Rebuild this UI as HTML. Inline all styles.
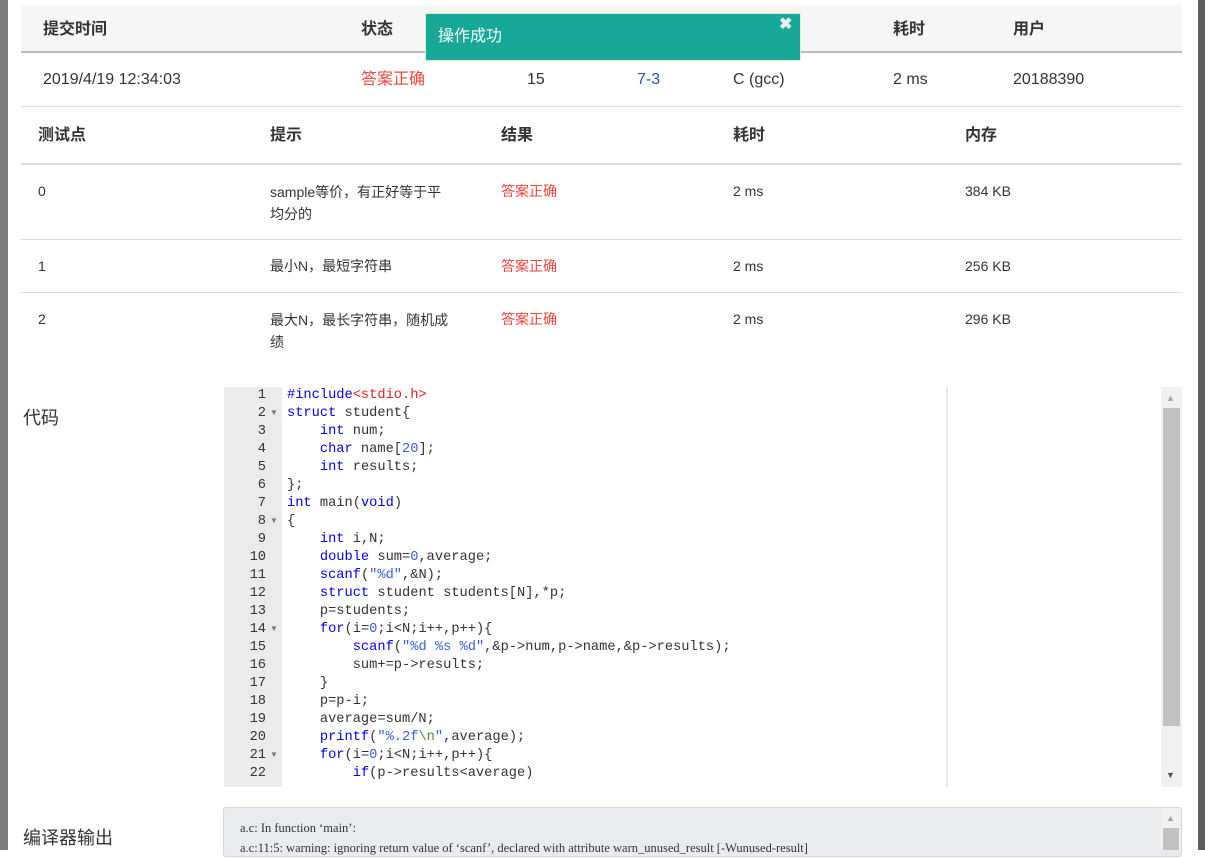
<!DOCTYPE html>
<html><head><meta charset="utf-8"><style>
*{margin:0;padding:0;box-sizing:border-box}
body{width:1205px;height:850px;overflow:hidden;background:#fff;position:relative;font-family:"Liberation Sans","Noto Sans CJK SC",sans-serif;color:#333}
.a{position:absolute;white-space:nowrap;line-height:20px}
.h{font-weight:bold;font-size:16px;color:#333}
.r{color:#f0443c}
.code{position:absolute;left:287px;top:387px;font-family:"Liberation Mono",monospace;font-size:13.7px;line-height:18px;color:#333;white-space:pre}
.gut{position:absolute;left:224px;top:387px;width:58px;height:400px;background:#ebebeb;font-family:"Liberation Mono",monospace;font-size:13.7px;line-height:18px;color:#333;text-align:right;padding-right:16px;white-space:pre}
.k{color:#0000ee}.s{color:#3a5fd6}.n{color:#3a5fd6}.i{color:#e02020}.g{color:#5a8a2a}
</style></head><body>
<div class="a" style="left:0;top:0;width:8px;height:850px;background:#7d7d7d"></div>
<div class="a" style="left:1198px;top:0;width:7px;height:850px;background:#5e5e5e"></div>
<div class="a" style="left:21px;top:5px;width:1161px;height:48px;background:#f6f6f6;border-bottom:2px solid #bbb"></div>
<div class="a h" style="left:43px;top:20px">提交时间</div>
<div class="a h" style="left:361px;top:20px">状态</div>
<div class="a h" style="left:893px;top:20px">耗时</div>
<div class="a h" style="left:1013px;top:20px">用户</div>
<div class="a" style="left:43px;top:70px;font-size:16px">2019/4/19 12:34:03</div>
<div class="a r" style="left:361px;top:70px;font-size:16px">答案正确</div>
<div class="a" style="left:527px;top:70px;font-size:16px">15</div>
<div class="a" style="left:637px;top:70px;font-size:16px;color:#2a5a9a">7-3</div>
<div class="a" style="left:733px;top:70px;font-size:16px">C (gcc)</div>
<div class="a" style="left:893px;top:70px;font-size:16px">2 ms</div>
<div class="a" style="left:1013px;top:70px;font-size:16px">20188390</div>
<div class="a" style="left:21px;top:106px;width:1161px;height:1px;background:#ddd"></div>
<div class="a" style="left:425px;top:13px;width:376px;height:48px;background:#17a898;border:1px solid #d9edc9;border-radius:2px"></div>
<div class="a" style="left:438px;top:27px;font-size:16px;color:#fff">操作成功</div>
<div class="a" style="left:779px;top:15px;font-size:16px;font-weight:bold;color:#eee">✖</div>

<div class="a h" style="left:38px;top:126px">测试点</div>
<div class="a h" style="left:270px;top:126px">提示</div>
<div class="a h" style="left:501px;top:126px">结果</div>
<div class="a h" style="left:733px;top:126px">耗时</div>
<div class="a h" style="left:965px;top:126px">内存</div>
<div class="a" style="left:21px;top:163px;width:1161px;height:2px;background:#ddd"></div>
<div class="a" style="left:38px;top:181px;font-size:14px">0</div>
<div class="a" style="left:270px;top:181px;font-size:14px;line-height:22px">sample等价，有正好等于平<br>均分的</div>
<div class="a r" style="left:501px;top:181px;font-size:14px">答案正确</div>
<div class="a" style="left:733px;top:181px;font-size:14px">2 ms</div>
<div class="a" style="left:965px;top:181px;font-size:14px">384 KB</div>
<div class="a" style="left:21px;top:239px;width:1161px;height:1px;background:#ddd"></div>
<div class="a" style="left:38px;top:256px;font-size:14px">1</div>
<div class="a" style="left:270px;top:256px;font-size:14px">最小N，最短字符串</div>
<div class="a r" style="left:501px;top:256px;font-size:14px">答案正确</div>
<div class="a" style="left:733px;top:256px;font-size:14px">2 ms</div>
<div class="a" style="left:965px;top:256px;font-size:14px">256 KB</div>
<div class="a" style="left:21px;top:292px;width:1161px;height:1px;background:#ddd"></div>
<div class="a" style="left:38px;top:309px;font-size:14px">2</div>
<div class="a" style="left:270px;top:309px;font-size:14px;line-height:22px">最大N，最长字符串，随机成<br>绩</div>
<div class="a r" style="left:501px;top:309px;font-size:14px">答案正确</div>
<div class="a" style="left:733px;top:309px;font-size:14px">2 ms</div>
<div class="a" style="left:965px;top:309px;font-size:14px">296 KB</div>

<div class="a" style="left:23px;top:408px;font-size:18px">代码</div>
<div class="gut">1
2
3
4
5
6
7
8
9
10
11
12
13
14
15
16
17
18
19
20
21
22</div>
<div class="a" style="left:270px;top:403px;font-size:8px;color:#777">▼</div>
<div class="a" style="left:270px;top:511px;font-size:8px;color:#777">▼</div>
<div class="a" style="left:270px;top:619px;font-size:8px;color:#777">▼</div>
<div class="a" style="left:270px;top:745px;font-size:8px;color:#777">▼</div>
<div class="code"><span class="k">#include</span><span class="i">&lt;stdio.h&gt;</span>
<span class="k">struct</span> student{
    <span class="k">int</span> num;
    <span class="k">char</span> name[<span class="n">20</span>];
    <span class="k">int</span> results;
};
<span class="k">int</span> main(<span class="k">void</span>)
{
    <span class="k">int</span> i,N;
    <span class="k">double</span> sum=<span class="n">0</span>,average;
    <span class="k">scanf</span>(<span class="s">"%d"</span>,&amp;N);
    <span class="k">struct</span> student students[N],*p;
    p=students;
    <span class="k">for</span>(i=<span class="n">0</span>;i&lt;N;i++,p++){
        <span class="k">scanf</span>(<span class="s">"%d %s %d"</span>,&amp;p-&gt;num,p-&gt;name,&amp;p-&gt;results);
        sum+=p-&gt;results;
    }
    p=p-i;
    average=sum/N;
    <span class="k">printf</span>(<span class="s">"%.2f</span><span class="g">\n</span><span class="s">"</span>,average);
    <span class="k">for</span>(i=<span class="n">0</span>;i&lt;N;i++,p++){
        <span class="k">if</span>(p-&gt;results&lt;average)</div>
<div class="a" style="left:946px;top:387px;width:2px;height:400px;background:#e8e8e8"></div>
<div class="a" style="left:1161px;top:387px;width:21px;height:400px;background:#f1f1f1"></div>
<div class="a" style="left:1163px;top:408px;width:17px;height:318px;background:#c1c1c1"></div>
<div class="a" style="left:1166px;top:388px;font-size:9px;color:#a3a3a3">▲</div>
<div class="a" style="left:1166px;top:765px;font-size:9px;color:#505050">▼</div>

<div class="a" style="left:23px;top:828px;font-size:18px">编译器输出</div>
<div class="a" style="left:223px;top:807px;width:959px;height:50px;background:#e9ecef;border:1px solid #d4d8dc;border-radius:3px"></div>
<div class="a" style="left:240px;top:818px;font-family:'Liberation Serif',serif;font-size:12.5px;line-height:20px;color:#333">a.c: In function ‘main’:<br>a.c:11:5: warning: ignoring return value of ‘scanf’, declared with attribute warn_unused_result [-Wunused-result]</div>
<div class="a" style="left:1161px;top:808px;width:20px;height:42px;background:#f1f1f1"></div>
<div class="a" style="left:1163px;top:828px;width:16px;height:22px;background:#c1c1c1"></div>
<div class="a" style="left:1166px;top:808px;font-size:9px;color:#a3a3a3">▲</div>
</body></html>
